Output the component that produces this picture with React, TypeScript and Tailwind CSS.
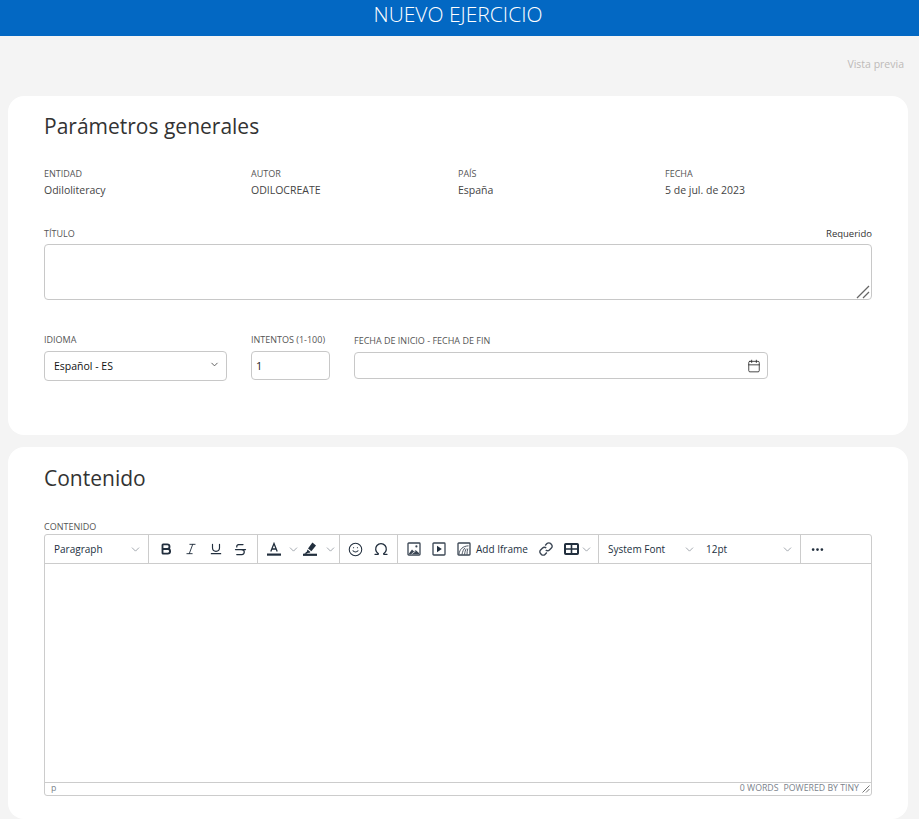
import React from 'react';
import { Bold, Calendar, ChevronDown, Ellipsis, Italic, Omega, Smile, Strikethrough, Underline } from 'lucide-react';

const Label = ({ children, className = '' }: { children: React.ReactNode; className?: string }) => (
  <label className={`block text-[9px] leading-[12px] uppercase text-[#555] ${className}`}>{children}</label>
);

const Info = ({ label, value }: { label: string; value: string }) => (
  <div>
    <Label>{label}</Label>
    <div className="mt-[2px] text-[10.5px] leading-[16px] text-[#444]">{value}</div>
  </div>
);

const Chevron = ({ className = '' }: { className?: string }) => (
  <ChevronDown size={13} strokeWidth={1.3} className={`text-[#7d858e] shrink-0 ${className}`} />
);

const ToolBtn = ({ children, className = 'w-[25px]' }: { children: React.ReactNode; className?: string }) => (
  <div className={`h-full flex items-center justify-center shrink-0 text-[#222f3e] ${className}`}>{children}</div>
);

const Group = ({ children, className = '' }: { children: React.ReactNode; className?: string }) => (
  <div className={`h-full flex items-center shrink-0 border-r border-[#ccc] ${className}`}>{children}</div>
);

const TextColorIcon = () => (
  <svg width="16" height="16" viewBox="0 0 16 16" fill="none">
    <path d="M4.8 10.5 8 2.5l3.2 8M5.8 8h4.4" stroke="#222f3e" strokeWidth="1.3" />
    <rect x="1" y="12.5" width="14" height="2.2" fill="#222f3e" />
  </svg>
);

const HighlightIcon = () => (
  <svg width="16" height="16" viewBox="0 0 16 16" fill="#222f3e">
    <path d="M10.4 1.6 14 4.4 9.4 10.2 6 7.6z" />
    <path d="M5.4 8.5 8.5 11l-1.4.9-1.1-.1-1.2 1H2.2l2.7-2.4z" />
    <rect x="1" y="12.7" width="14" height="2.2" />
  </svg>
);

const ImageIcon = () => (
  <svg width="16" height="16" viewBox="0 0 16 16" fill="none">
    <rect x="2" y="2" width="12" height="12" rx=".8" stroke="#3a4553" strokeWidth="1.3" />
    <circle cx="10.4" cy="5.4" r="1.1" fill="#3a4553" />
    <path d="M3 12.6 6 8.4l2 2 1.6-1.4 3.4 3v1H3z" fill="#3a4553" />
    <path d="M5.6 13 9.6 10" stroke="#fff" strokeWidth=".8" />
  </svg>
);

const VideoIcon = () => (
  <svg width="16" height="16" viewBox="0 0 16 16" fill="none">
    <rect x="2" y="2" width="12" height="12" rx=".8" stroke="#3a4553" strokeWidth="1.3" />
    <path d="M6 4.8 10.8 8 6 11.2z" fill="#222f3e" />
  </svg>
);

const IframeIcon = () => (
  <svg width="16" height="16" viewBox="0 0 16 16" fill="none">
    <rect x="2" y="2" width="12" height="12" rx=".8" stroke="#3a4553" strokeWidth="1.3" />
    <path d="M3 13c.8-4.8 3.6-7.8 9.5-8.2M6 13.5c.4-3 1.8-5.6 3-6.6M8.6 13.5c.2-2.4.8-4.4 1.6-5.8M11 13.5c0-2 .3-4.4.8-6" stroke="#3a4553" strokeWidth=".9" />
  </svg>
);

const LinkIcon = () => (
  <svg width="16" height="16" viewBox="0 0 16 16" fill="none" stroke="#3a4553" strokeWidth="1.4">
    <path d="M7.2 4.4 9 2.6a2.5 2.5 0 0 1 3.6 0l.8.8a2.5 2.5 0 0 1 0 3.6l-2 2a2.5 2.5 0 0 1-3.6 0" />
    <path d="M8.8 11.6 7 13.4a2.5 2.5 0 0 1-3.6 0l-.8-.8a2.5 2.5 0 0 1 0-3.6l2-2a2.5 2.5 0 0 1 3.6 0" />
  </svg>
);

const TableIcon = () => (
  <svg width="15" height="12" viewBox="0 0 15 12" fill="none">
    <rect x="1" y="1" width="13" height="10" rx=".8" stroke="#222f3e" strokeWidth="2" />
    <path d="M1 6h13M7.5 1v10" stroke="#222f3e" strokeWidth="1.6" />
  </svg>
);

const Toolbar = () => (
  <div className="h-[29px] flex items-center border-b border-[#ccc] text-[10px] text-[#222f3e]">
    <Group className="w-[104px] pl-[9px] pr-[6px] justify-between">
      <span>Paragraph</span>
      <Chevron />
    </Group>
    <Group className="w-[109px] pl-[4px]">
      <ToolBtn><Bold size={14} strokeWidth={3.2} /></ToolBtn>
      <ToolBtn><Italic size={14} strokeWidth={1.6} /></ToolBtn>
      <ToolBtn><Underline size={14} strokeWidth={2} /></ToolBtn>
      <ToolBtn><Strikethrough size={15} strokeWidth={2} /></ToolBtn>
    </Group>
    <Group className="w-[82px] pl-[8px]">
      <TextColorIcon />
      <Chevron className="ml-[5px]" />
      <span className="ml-[2px] flex"><HighlightIcon /></span>
      <Chevron className="ml-[6px]" />
    </Group>
    <Group className="w-[58px] pl-[3px]">
      <ToolBtn><Smile size={15} strokeWidth={1.7} /></ToolBtn>
      <ToolBtn><Omega size={16} strokeWidth={2} /></ToolBtn>
    </Group>
    <Group className="w-[201px] pl-[3px]">
      <ToolBtn><ImageIcon /></ToolBtn>
      <ToolBtn><VideoIcon /></ToolBtn>
      <ToolBtn><IframeIcon /></ToolBtn>
      <span className="w-[52px] whitespace-nowrap">Add Iframe</span>
      <ToolBtn className="w-[25px] ml-[5px]"><LinkIcon /></ToolBtn>
      <ToolBtn className="w-[18px] ml-[4px]"><TableIcon /></ToolBtn>
      <Chevron />
    </Group>
    <Group className="w-[202px] pl-[9px] pr-[5px]">
      <span className="w-[75px] whitespace-nowrap">System Font</span>
      <Chevron />
      <span className="ml-[10px] w-[75px]">12pt</span>
      <Chevron />
    </Group>
    <ToolBtn className="w-[33px]"><Ellipsis size={15} strokeWidth={2.4} /></ToolBtn>
  </div>
);

const Editor = () => (
  <div className="h-[262px] flex flex-col border border-[#ccc] rounded-[3px] overflow-hidden">
    <Toolbar />
    <div className="flex-1" />
    <div className="h-[13px] flex items-center justify-between border-t border-[#ccc] pl-[6px] pr-[1px] text-[8.75px] text-[#7a828b]">
      <span>p</span>
      <div className="flex items-center uppercase">
        <span>0 words</span>
        <span className="ml-[5px]">Powered by Tiny</span>
        <svg width="8" height="8" viewBox="0 0 8 8" className="ml-[3px]" stroke="#777" strokeWidth="1">
          <path d="M.5 7.5l7-7M4 7.5l3.5-3.5" />
        </svg>
      </div>
    </div>
  </div>
);

export default function App() {
  return (
    <div className="min-h-screen bg-[#f4f4f4] font-['Open_Sans',sans-serif]">
      <header className="h-9 bg-[#0368c3] flex items-center justify-center pb-[6px] pr-[3px]">
        <h1 className="text-[21px] font-light text-white">NUEVO EJERCICIO</h1>
      </header>

      <div className="h-[60px] flex justify-end pt-[20px] pr-[15px]">
        <span className="text-[10.5px] leading-[16px] text-[#bdbab8]">Vista previa</span>
      </div>

      <main className="pl-2 pr-[11px] flex flex-col gap-3">
        <section className="h-[339px] bg-white rounded-2xl px-9 pt-[15px]">
          <h2 className="text-[21px] leading-[30px] text-[#333]">Parámetros generales</h2>
          <div className="mt-[27px] grid grid-cols-4">
            <Info label="Entidad" value="Odiloliteracy" />
            <Info label="Autor" value="ODILOCREATE" />
            <Info label="País" value="España" />
            <Info label="Fecha" value="5 de jul. de 2023" />
          </div>

          <div className="mt-[30px] flex justify-between">
            <Label>Título</Label>
            <span className="text-[9.5px] leading-[12px] text-[#333]">Requerido</span>
          </div>
          <div className="relative mt-[4px]">
            <textarea className="block w-full h-[56px] border border-[#c8c8c8] rounded-[4px] resize-none outline-none" />
            <svg width="14" height="14" viewBox="0 0 14 14" className="absolute right-[2px] bottom-[1px]" stroke="#666" strokeWidth="1.3" fill="none">
              <path d="M1 13 13 1M7 13l6-6" />
            </svg>
          </div>

          <div className="mt-[34px] flex items-start">
            <div className="w-[183px]">
              <Label>Idioma</Label>
              <div className="mt-[5px] h-[30px] flex items-center justify-between border border-[#c8c8c8] rounded-[4px] pl-[9px] pr-[6px] pt-[1px] text-[10.5px] text-[#111]">
                <span>Español - ES</span>
                <ChevronDown size={11} strokeWidth={2} className="text-[#555] -mt-[5px]" />
              </div>
            </div>
            <div className="ml-[24px] w-[79px]">
              <Label>Intentos (1-100)</Label>
              <div className="mt-[5px] h-[29px] flex items-center border border-[#c8c8c8] rounded-[4px] pl-[4px] pt-[1px] text-[11px] text-[#222]">1</div>
            </div>
            <div className="ml-[24px] w-[414px] pt-[1px]">
              <Label>Fecha de inicio - Fecha de fin</Label>
              <div className="mt-[5px] h-[27px] flex items-center justify-end border border-[#c8c8c8] rounded-[4px] pr-[6px]">
                <Calendar size={14} strokeWidth={1.4} className="text-[#222]" />
              </div>
            </div>
          </div>
        </section>

        <section className="h-[372px] bg-white rounded-2xl px-9 pt-[16px]">
          <h2 className="text-[21px] leading-[30px] text-[#333]">Contenido</h2>
          <Label className="mt-[28px] mb-[1px]">Contenido</Label>
          <Editor />
        </section>
      </main>
    </div>
  );
}
